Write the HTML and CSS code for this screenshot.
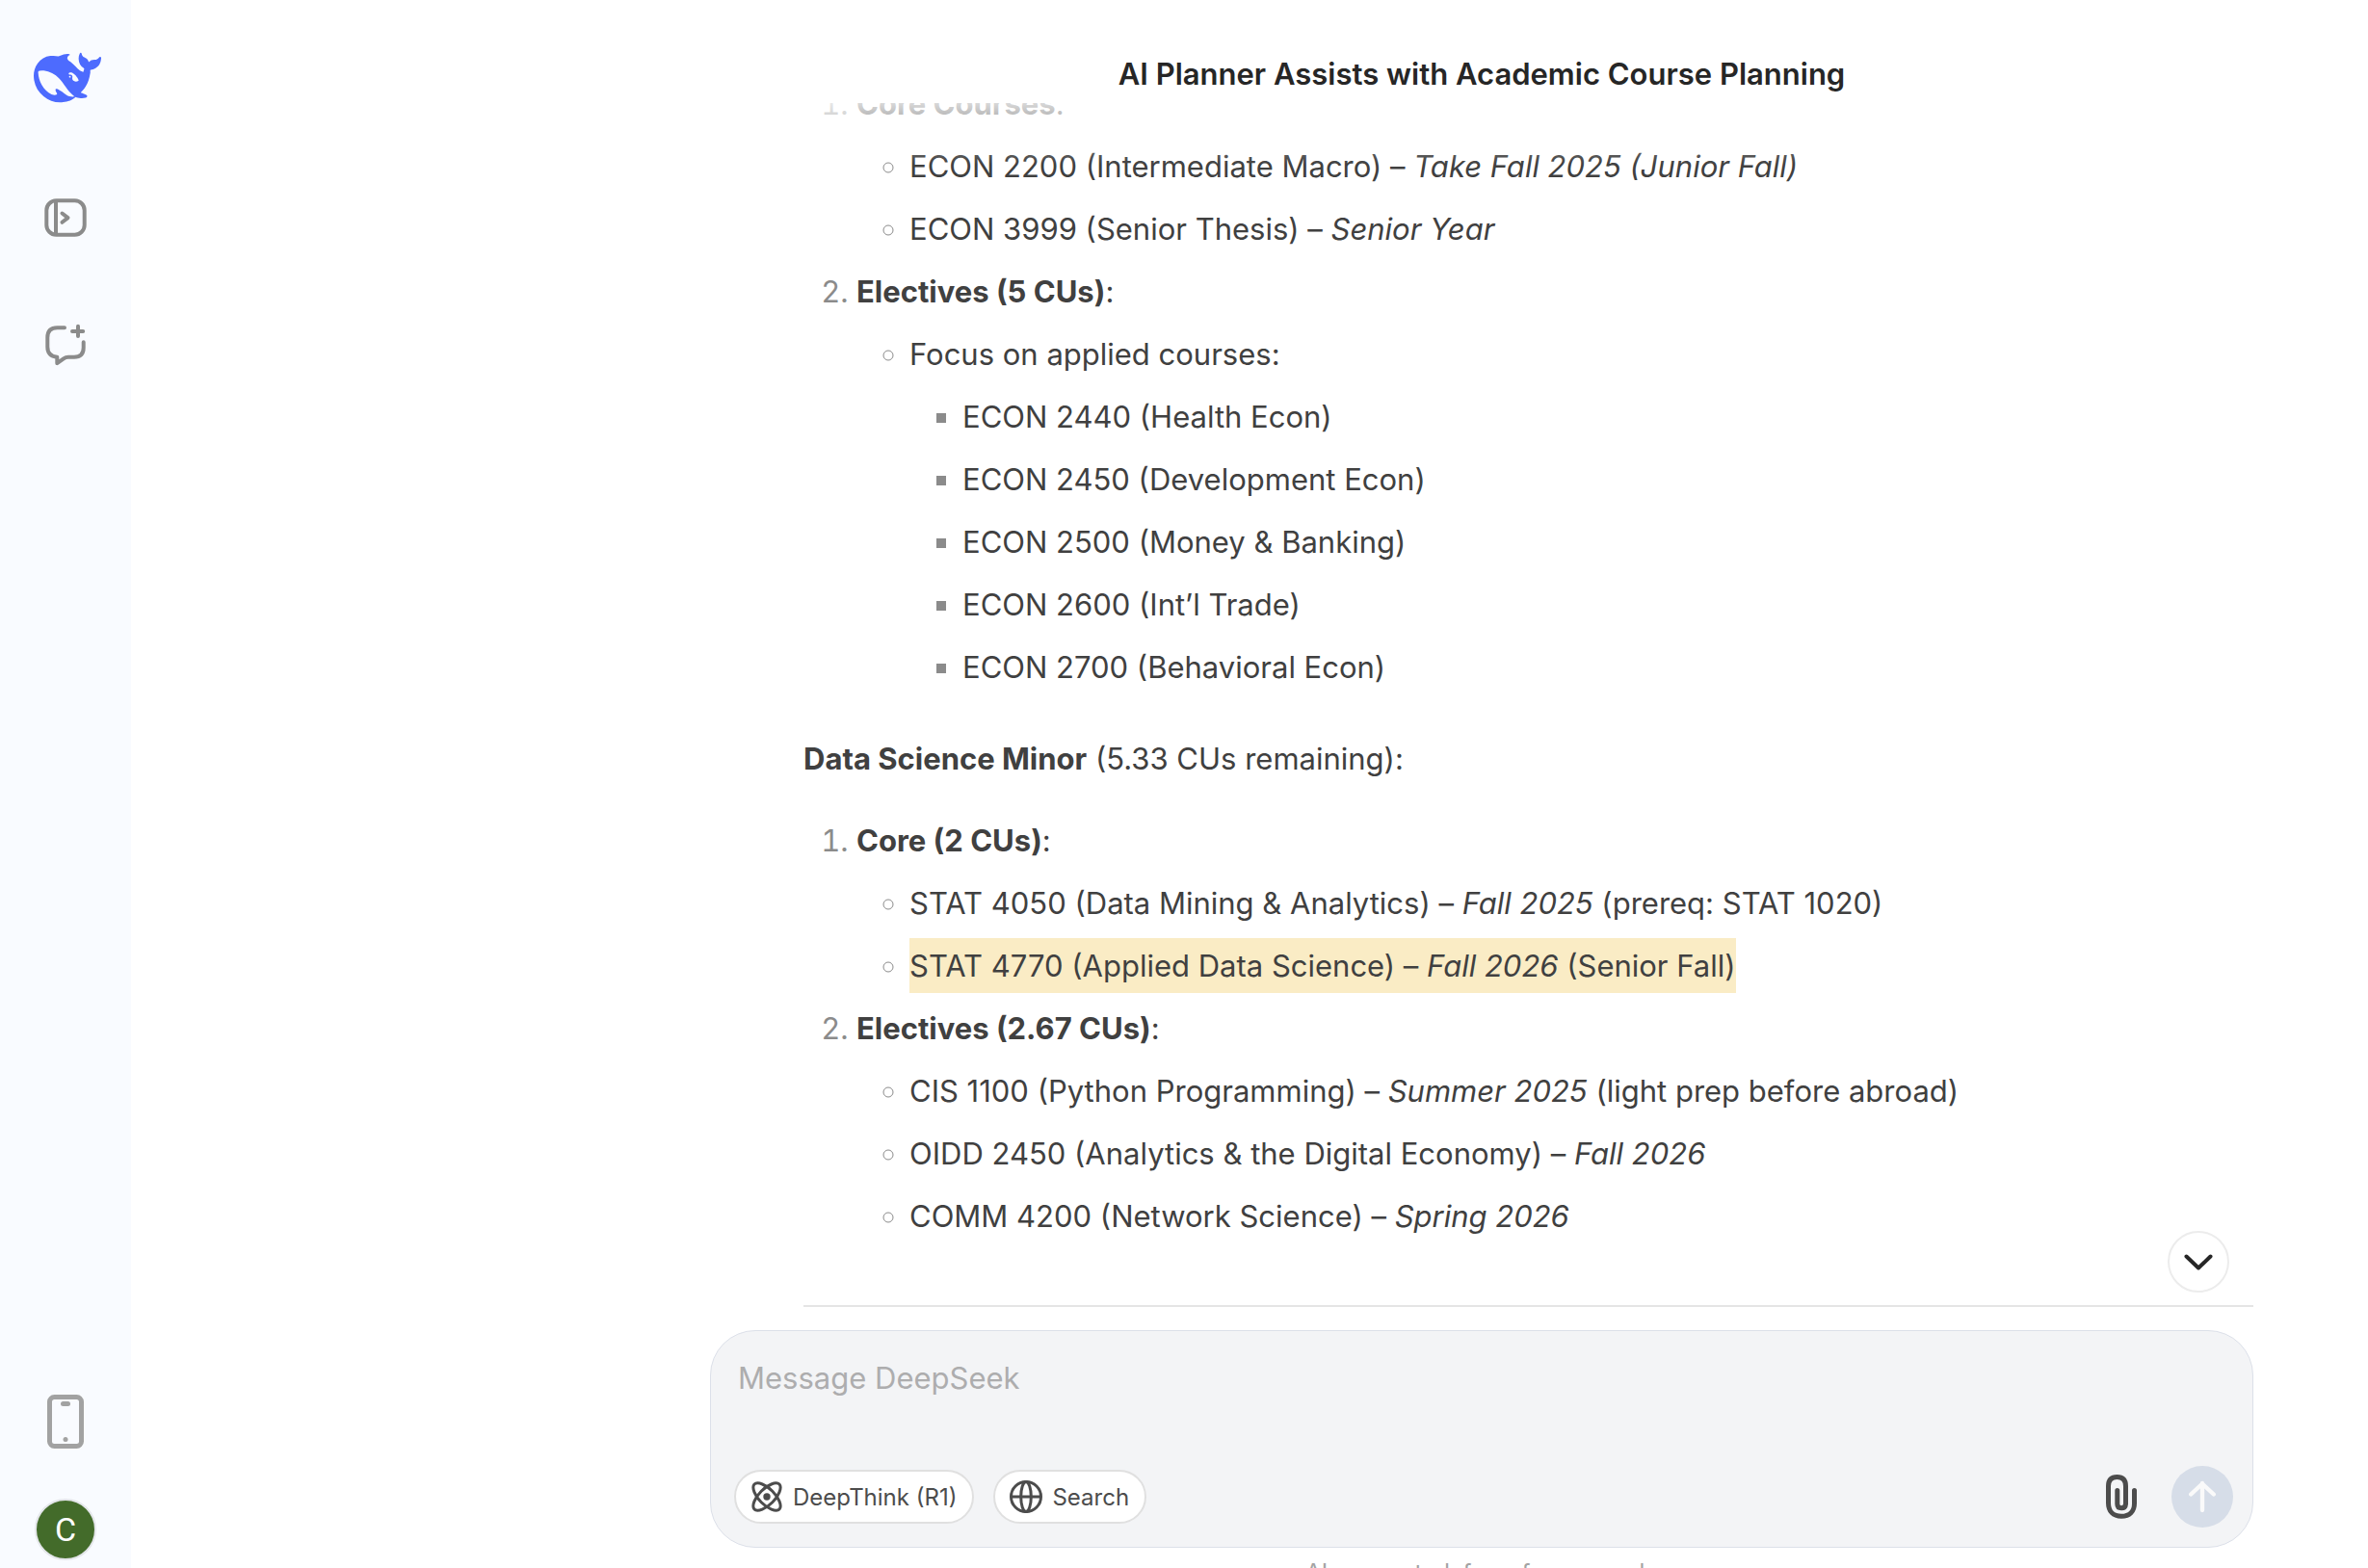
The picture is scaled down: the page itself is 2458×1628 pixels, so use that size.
FILE: index.html
```html
<!DOCTYPE html>
<html lang="en">
<head>
<meta charset="utf-8">
<meta name="viewport" content="width=device-width, initial-scale=1">
<title>AI Planner Assists with Academic Course Planning</title>
<link rel="stylesheet" href="styles.css">
</head>
<body>
<div class="app">
  <nav class="sidebar" aria-label="Sidebar">
    <a class="logo" href="#" aria-label="DeepSeek home">
      <svg width="70" height="70" viewBox="0 0 24 24" fill="#4d6bfe"><path d="M23.748 4.482c-.254-.124-.364.113-.512.234-.051.039-.094.09-.137.136-.372.397-.806.657-1.373.626-.829-.046-1.537.214-2.163.848-.133-.782-.575-1.248-1.247-1.548-.352-.156-.708-.311-.955-.65-.172-.241-.219-.51-.305-.774-.055-.16-.11-.323-.293-.35-.2-.031-.278.136-.356.276-.313.572-.434 1.202-.422 1.84.027 1.436.633 2.58 1.838 3.393.137.093.172.187.129.323-.082.28-.18.552-.266.833-.055.179-.137.217-.329.14a5.526 5.526 0 01-1.736-1.18c-.857-.828-1.631-1.742-2.597-2.458a11.365 11.365 0 00-.689-.471c-.985-.957.13-1.743.388-1.836.27-.098.093-.432-.779-.428-.872.004-1.67.295-2.687.684a3.055 3.055 0 01-.465.137 9.597 9.597 0 00-2.883-.102c-1.885.21-3.39 1.102-4.497 2.623C.082 8.606-.231 10.684.152 12.85c.403 2.284 1.569 4.175 3.36 5.653 1.858 1.533 3.997 2.284 6.438 2.14 1.482-.085 3.133-.284 4.994-1.86.47.234.962.327 1.78.397.63.059 1.236-.03 1.705-.128.735-.156.684-.837.419-.961-2.155-1.004-1.682-.595-2.113-.926 1.096-1.296 2.746-2.642 3.392-7.003.05-.347.007-.565 0-.845-.004-.17.035-.237.23-.256a4.173 4.173 0 001.545-.475c1.396-.763 1.96-2.015 2.093-3.517.02-.23-.004-.467-.247-.588zM11.581 18c-2.089-1.642-3.102-2.183-3.52-2.16-.392.024-.321.471-.235.763.09.288.207.486.371.739.114.167.192.416-.113.603-.673.416-1.842-.14-1.897-.167-1.361-.802-2.5-1.86-3.301-3.307-.774-1.393-1.224-2.887-1.298-4.482-.02-.386.093-.522.477-.592a4.696 4.696 0 011.529-.039c2.132.312 3.946 1.265 5.468 2.774.868.86 1.525 1.887 2.202 2.891.72 1.066 1.494 2.082 2.48 2.914.348.292.625.514.891.677-.802.09-2.14.11-3.054-.614zm1-6.44a.306.306 0 01.415-.287.302.302 0 01.2.288.306.306 0 01-.31.307.303.303 0 01-.304-.308zm3.11 1.596c-.2.081-.399.151-.59.16a1.245 1.245 0 01-.798-.254c-.274-.23-.47-.358-.552-.758a1.73 1.73 0 01.016-.588c.07-.327-.008-.537-.239-.727-.187-.156-.426-.199-.688-.199a.559.559 0 01-.254-.078c-.11-.054-.2-.19-.114-.358.028-.054.16-.186.192-.21.356-.202.767-.136 1.146.016.352.144.618.408 1.001.782.391.451.462.576.685.914.176.265.336.537.445.848.067.195-.019.354-.25.452z"/></svg>
    </a>
    <button class="icon-button" type="button" aria-label="Open sidebar">
      <svg width="44" height="44" viewBox="0 0 44 44" fill="none" stroke="#8b8b8b" stroke-width="4"><rect x="2.3" y="4.3" width="39.4" height="35.4" rx="10"/><path d="M12 4v36"/><path d="M18.500 17.500L24.500 22.100L18.500 26.800" stroke-linecap="round" stroke-linejoin="round"/></svg>
    </button>
    <button class="icon-button" type="button" aria-label="New chat">
      <svg width="44" height="44" viewBox="0 0 44 44" fill="none" stroke="#8b8b8b" stroke-width="4" stroke-linecap="round" stroke-linejoin="round"><path d="M21 4.300H13.500Q3.300 4.300 3.300 14.500V24C3.300 30.500 7 34.200 13.300 34.700V41.200L20 36.300Q22.200 34.700 25 34.700H31Q40.700 34.700 40.700 25V19.300"/><path d="M35 2.800V13M29 7.900H40.200"/></svg>
    </button>
    <div class="sidebar-foot">
      <button class="icon-button" type="button" aria-label="Get the app">
        <svg width="38" height="56" viewBox="0 0 38 56" fill="none" stroke="#a2a2a2"><rect x="2.500" y="2.500" width="33" height="51" rx="5" stroke-width="5"/><path d="M16.500 9.400h5" stroke-width="5" stroke-linecap="round"/><circle cx="19" cy="46.500" r="2.500" fill="#a2a2a2" stroke="none"/></svg>
      </button>
      <button class="avatar" type="button" aria-label="Account">C</button>
    </div>
  </nav>

  <main class="main">
    <h1 class="title">AI Planner Assists with Academic Course Planning</h1>

    <section class="chat">
      <article class="message">
        <ol>
          <li><strong>Core Courses</strong>:
            <ul>
              <li>ECON 2200 (Intermediate Macro) – <em>Take Fall 2025 (Junior Fall)</em></li>
              <li>ECON 3999 (Senior Thesis) – <em>Senior Year</em></li>
            </ul>
          </li>
          <li><strong>Electives (5 CUs)</strong>:
            <ul>
              <li>Focus on applied courses:
                <ul>
                  <li>ECON 2440 (Health Econ)</li>
                  <li>ECON 2450 (Development Econ)</li>
                  <li>ECON 2500 (Money &amp; Banking)</li>
                  <li>ECON 2600 (Int’l Trade)</li>
                  <li>ECON 2700 (Behavioral Econ)</li>
                </ul>
              </li>
            </ul>
          </li>
        </ol>
        <p><strong>Data Science Minor</strong> (5.33 CUs remaining):</p>
        <ol>
          <li><strong>Core (2 CUs)</strong>:
            <ul>
              <li>STAT 4050 (Data Mining &amp; Analytics) – <em>Fall 2025</em> (prereq: STAT 1020)</li>
              <li><mark>STAT 4770 (Applied Data Science) – <em>Fall 2026</em> (Senior Fall)</mark></li>
            </ul>
          </li>
          <li><strong>Electives (2.67 CUs)</strong>:
            <ul>
              <li>CIS 1100 (Python Programming) – <em>Summer 2025</em> (light prep before abroad)</li>
              <li>OIDD 2450 (Analytics &amp; the Digital Economy) – <em>Fall 2026</em></li>
              <li>COMM 4200 (Network Science) – <em>Spring 2026</em></li>
            </ul>
          </li>
        </ol>
        <hr>
      </article>
      <button class="scroll-down" type="button" aria-label="Scroll to bottom">
        <svg width="32" height="32" viewBox="0 0 32 32" fill="none" stroke="#262626" stroke-width="4" stroke-linecap="round" stroke-linejoin="round"><path d="M3.500 10.500L16 22.500L28.500 10.500"/></svg>
      </button>
    </section>

    <form class="composer">
      <textarea class="prompt" rows="1" placeholder="Message DeepSeek" aria-label="Message DeepSeek"></textarea>
      <div class="tools">
        <button class="pill" type="button">
          <svg width="34" height="34" viewBox="0 0 34 34" fill="none" stroke="#4c4c4c" stroke-width="3"><path d="M4 4C7.500 .8 16.500 4.800 22.800 11.200S33.200 26.500 30 30S17.500 29.200 11.200 22.800S.8 7.500 4 4Z"/><path d="M30 4C26.500 .8 17.500 4.800 11.200 11.200S.8 26.500 4 30S16.500 29.200 22.800 22.800S33.200 7.500 30 4Z"/><circle cx="17" cy="17" r="3.700" fill="#4c4c4c" stroke="none"/></svg>
          DeepThink (R1)
        </button>
        <button class="pill" type="button">
          <svg width="34" height="34" viewBox="0 0 34 34" fill="none" stroke="#4c4c4c" stroke-width="3"><circle cx="17" cy="17" r="15.500"/><ellipse cx="17" cy="17" rx="5.300" ry="15.500"/><path d="M2 17h30"/></svg>
          Search
        </button>
        <button class="attach" type="button" aria-label="Attach file">
          <svg width="32" height="46" viewBox="0 0 32 46" fill="none" stroke="#4c4c4c" stroke-width="5" stroke-linecap="round"><path d="M11.800 16.500V30.500Q11.800 34.800 16 34.800T20.500 30.500V12C20.500 6 17.500 2.500 11.500 2.500S2.500 6 2.500 12V29.500C2.500 38 7.500 43.300 16 43.300S29.500 38 29.500 30V16.500"/></svg>
        </button>
        <button class="send" type="submit" aria-label="Send">
          <svg width="32" height="34" viewBox="0 0 32 34" fill="none" stroke="#fafafa" stroke-width="4.300" stroke-linecap="round" stroke-linejoin="round"><path d="M16 31V3M4.200 14.500L16 3.500L27.800 14.500"/></svg>
        </button>
      </div>
    </form>
    <p class="disclaimer">AI-generated, for reference only</p>
  </main>
</div>
</body>
</html>
```
FILE: styles.css
```css
* {
  box-sizing: border-box;
}

body {
  margin: 0;
  background: #fff;
  color: #404040;
  font-family: Inter, "Liberation Sans", sans-serif;
  font-size: 31px;
  line-height: 57px;
}

button {
  display: flex;
  align-items: center;
  justify-content: center;
  margin: 0;
  padding: 0;
  border: 0;
  background: none;
  color: inherit;
  font: inherit;
  cursor: pointer;
}

svg {
  display: block;
}

.app {
  display: flex;
  height: 100vh;
  overflow: hidden;
}

/* Sidebar */

.sidebar {
  display: flex;
  flex: 0 0 136px;
  flex-direction: column;
  align-items: center;
  padding: 46px 0 8px;
  background: #f9fbff;
}

.logo {
  padding-left: 4px;
}

.icon-button {
  margin-top: 88px;
}

.sidebar-foot {
  display: flex;
  flex-direction: column;
  align-items: center;
  gap: 52px;
  margin-top: auto;
}

.sidebar-foot .icon-button {
  margin-top: 0;
}

.avatar {
  width: 64px;
  height: 64px;
  border: 2px solid #e4e6ea;
  border-radius: 50%;
  background: #436b2a;
  color: #fff;
  font-family: Roboto, sans-serif;
  font-size: 34px;
}

/* Conversation */

.main {
  display: flex;
  flex: 1;
  flex-direction: column;
  min-width: 0;
  padding: 0 119px 0 601px;
}

.title {
  margin: 0;
  padding-top: 47px;
  color: #262626;
  font-size: 31px;
  font-weight: 600;
  line-height: 60px;
  text-align: center;
}

.chat {
  position: relative;
  display: flex;
  flex: 1;
  flex-direction: column;
  justify-content: flex-end;
  min-height: 0;
  overflow: hidden;
  padding: 0 0 24px 97px;
}

.chat::before {
  content: "";
  position: absolute;
  inset: 0 0 auto;
  height: 64px;
  background: linear-gradient(rgba(255, 255, 255, 0.8), rgba(255, 255, 255, 0));
}

.message ol,
.message ul {
  margin: 0;
  padding-left: 55px;
}

.message li + li,
.message li > ul {
  margin-top: 8px;
}

.message li::marker {
  color: #8b8b8b;
}

.message p {
  margin: 38px 0 28px;
}

.message strong {
  font-weight: 700;
}

.message mark {
  display: inline-block;
  background: #faecc5;
  color: inherit;
}

.message hr {
  height: 2px;
  margin: 64px 0 0;
  border: 0;
  background: #e5e5e5;
}

.scroll-down {
  position: absolute;
  right: 25px;
  bottom: 39px;
  width: 64px;
  height: 64px;
  border: 2px solid #ececec;
  border-radius: 50%;
  background: #fff;
}

/* Composer */

.composer {
  display: flex;
  flex-direction: column;
  gap: 63px;
  padding: 20px 20px 20px 24px;
  border: 1px solid #dce0e9;
  border-radius: 47px;
  background: #f3f4f6;
}

.prompt {
  height: 57px;
  margin: 0;
  padding: 0 4px;
  border: 0;
  outline: 0;
  background: none;
  color: #404040;
  font: inherit;
  resize: none;
}

.prompt::placeholder {
  color: #adadae;
}

.tools {
  display: flex;
  align-items: center;
  gap: 20px;
}

.pill {
  gap: 10px;
  height: 56px;
  padding: 0 16px 0 15px;
  border: 2px solid #e0e0e0;
  border-radius: 28px;
  background: #fff;
  color: #4c4c4c;
  font-size: 24px;
}

.attach {
  margin: 0 16px 0 auto;
}

.send {
  width: 64px;
  height: 64px;
  border-radius: 50%;
  background: #d6dde8;
}

.disclaimer {
  height: 21px;
  margin: 0;
  padding-top: 6px;
  color: #a3a3a3;
  font-size: 24px;
  line-height: 40px;
  text-align: center;
}
```
